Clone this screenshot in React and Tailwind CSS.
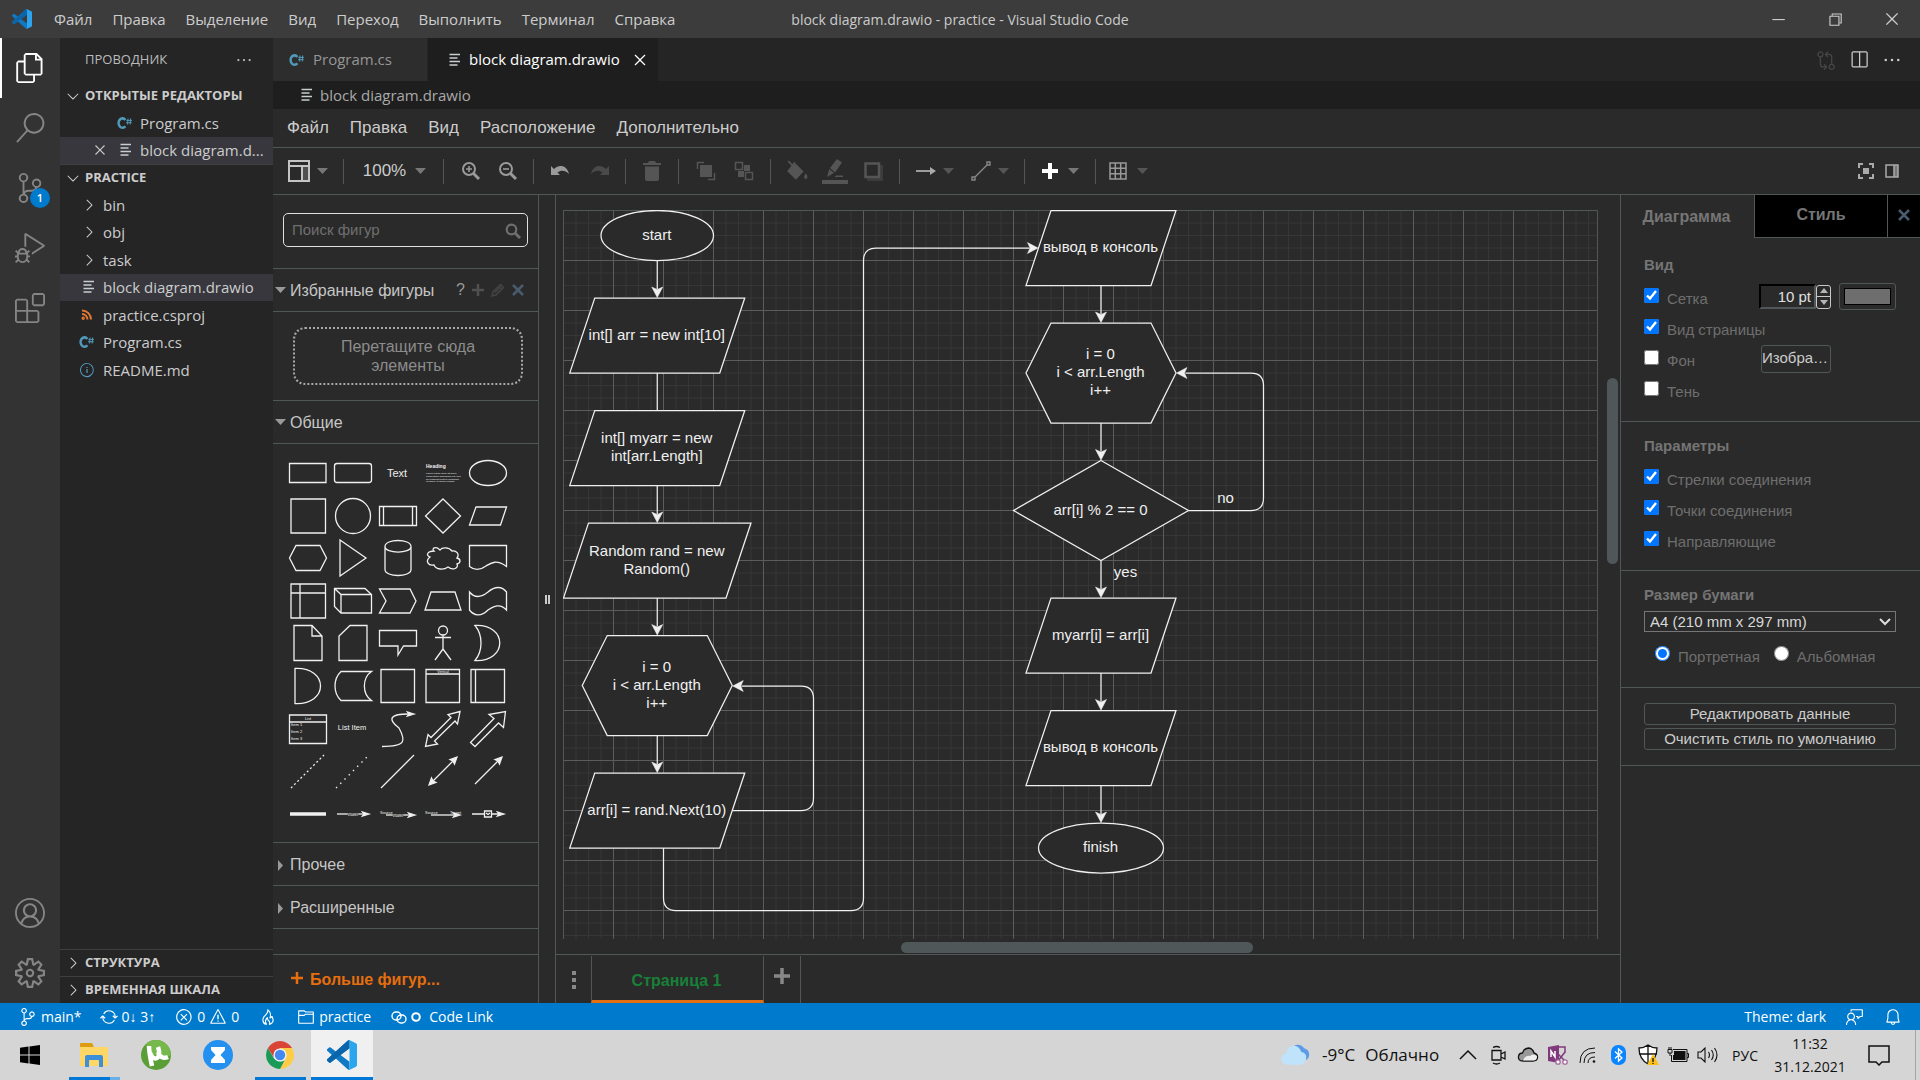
import React from "react";
import {
  VscFiles, VscSearch, VscSourceControl, VscDebugAlt, VscExtensions, VscAccount, VscSettingsGear,
  VscChevronDown, VscChevronRight, VscClose, VscEllipsis, VscSplitHorizontal, VscGitCompare,
  VscSync, VscError, VscWarning, VscFlame, VscFolder, VscFeedback, VscBell,
  VscChromeMinimize, VscChromeRestore, VscChromeClose, VscInfo,
} from "react-icons/vsc";

const UI = "font-['Open_Sans','Noto_Sans',sans-serif]";
const ARIAL = "font-['Liberation_Sans',Arial,sans-serif]";

/* ---------- small shared icons ---------- */

function VsCodeLogo({ className }) {
  return (
    <svg viewBox="0 0 100 100" className={className}>
      <path fill="#0f79c4" d="M75 27.3 45.1 50 75 72.7V98.9a6.2 6.2 0 0 1-6.3-1.2L29.4 62 12.2 75a4.2 4.2 0 0 1-5.3-.2l-5.5-5a4.2 4.2 0 0 1 0-6.2L16.3 50 1.4 36.4a4.2 4.2 0 0 1 0-6.2l5.5-5a4.2 4.2 0 0 1 5.3-.2l17.2 13L68.7 2.1A6.2 6.2 0 0 1 75 .9z" />
      <path fill="#0b65ab" d="M1.4 63.6 68.7 2.1A6.2 6.2 0 0 1 75 .9v26.4L12.2 75a4.2 4.2 0 0 1-5.3-.2l-5.5-5a4.2 4.2 0 0 1 0-6.2z" />
      <path fill="#2ba5ee" d="M75.9.9 96.5 10.8a6.3 6.3 0 0 1 3.5 5.6v67.2a6.3 6.3 0 0 1-3.5 5.6l-20.6 9.9a6.2 6.2 0 0 1-7.1-1.2c2.3 2.3 6.2.7 6.2-2.6V4.7c0-3.3-3.9-4.9-6.2-2.6a6.2 6.2 0 0 1 7.1-1.2z" />
    </svg>
  );
}

function CSharpIcon() {
  return (
    <svg viewBox="0 0 16 16" className="h-4 w-4 shrink-0" fill="none" stroke="#519aba">
      <path d="M8.3 5A3.8 4.7 0 1 0 8.3 11.2" strokeWidth="2.6" />
      <path d="M11 3.5 10.6 9.5M13.6 3.5 13.2 9.5M9.3 5.4H15M9 7.7H14.7" strokeWidth="1" />
    </svg>
  );
}

function LinesIcon() {
  return (
    <svg viewBox="0 0 16 16" className="h-4 w-4 shrink-0" stroke="#c8cdcf" strokeWidth="1.4">
      <path d="M2.5 2.5H13M2.5 6H10.5M2.5 9.5H13M2.5 13H10.5" />
    </svg>
  );
}

function FeedIcon() {
  return (
    <svg viewBox="0 0 16 16" className="h-4 w-4 shrink-0" fill="none" stroke="#e37933" strokeWidth="2">
      <path d="M3 3.5a9 9 0 0 1 9 9M3 7a5.5 5.5 0 0 1 5.5 5.5" />
      <circle cx="4.2" cy="11.3" r="0.7" />
    </svg>
  );
}

function Caret({ className = "" }) {
  return (
    <svg viewBox="0 0 11 6" className={`h-[6px] w-[11px] shrink-0 ${className}`}>
      <path d="M0 0H11L5.5 6z" fill="currentColor" />
    </svg>
  );
}

/* ---------- window chrome ---------- */

const MENUS = ["Файл", "Правка", "Выделение", "Вид", "Переход", "Выполнить", "Терминал", "Справка"];

function TitleBar() {
  return (
    <header className="relative flex h-[38px] shrink-0 items-center bg-[#3c3c3c] text-[#cccccc]">
      <VsCodeLogo className="ml-3 h-5 w-5" />
      <nav className="ml-3 flex">
        {MENUS.map((m) => (
          <button key={m} className="px-[10px] text-[15px]">{m}</button>
        ))}
      </nav>
      <h1 className="pointer-events-none absolute inset-x-0 text-center text-[14px]">
        block diagram.drawio - practice - Visual Studio Code
      </h1>
      <div className="ml-auto flex">
        <button aria-label="Свернуть" className="flex w-[57px] justify-center"><VscChromeMinimize size={18} /></button>
        <button aria-label="Восстановить" className="flex w-[57px] justify-center"><VscChromeRestore size={18} /></button>
        <button aria-label="Закрыть" className="flex w-[57px] justify-center"><VscChromeClose size={18} /></button>
      </div>
    </header>
  );
}

function ActivityBar() {
  const item = "flex h-[60px] w-full items-center justify-center";
  return (
    <nav className="flex w-[60px] shrink-0 flex-col bg-[#333333] text-[#858585]">
      <button aria-label="Проводник" className={`${item} border-l-2 border-white pr-0.5 text-white`}><VscFiles size={30} /></button>
      <button aria-label="Поиск" className={item}><VscSearch size={30} /></button>
      <button aria-label="Система управления версиями" className={`${item} relative`}>
        <VscSourceControl size={30} />
        <span className="absolute right-[10px] bottom-[10px] flex h-5 w-5 items-center justify-center rounded-full bg-[#007acc] text-[11px] font-semibold text-white">1</span>
      </button>
      <button aria-label="Запуск и отладка" className={item}><VscDebugAlt size={30} /></button>
      <button aria-label="Расширения" className={item}><VscExtensions size={30} /></button>
      <button aria-label="Учётные записи" className={`${item} mt-auto`}><VscAccount size={30} /></button>
      <button aria-label="Управление" className={item}><VscSettingsGear size={30} /></button>
    </nav>
  );
}

function SectionHead({ open, children, className = "" }) {
  const Icon = open ? VscChevronDown : VscChevronRight;
  return (
    <button className={`flex h-[27px] w-full shrink-0 items-center whitespace-nowrap pl-1 text-[13px] font-bold text-[#cccccc] ${className}`}>
      <Icon size={18} className="mr-[3px] shrink-0" />
      {children}
    </button>
  );
}

function Explorer() {
  const row = "flex items-center whitespace-nowrap text-left";
  return (
    <aside className="flex w-[213px] shrink-0 flex-col overflow-hidden bg-[#252526] text-[15px] text-[#cccccc]">
      <div className="flex h-[44px] shrink-0 items-center pl-[25px] pr-5 text-[13px] text-[#bbbbbb]">
        <h2>ПРОВОДНИК</h2>
        <button aria-label="Дополнительные действия" className="ml-auto"><VscEllipsis size={18} /></button>
      </div>
      <SectionHead open>ОТКРЫТЫЕ РЕДАКТОРЫ</SectionHead>
      <div className="grid h-[55px] shrink-0 grid-cols-1 grid-rows-2">
        <button className={`${row} gap-[7px] pl-[57px]`}><CSharpIcon />Program.cs</button>
        <button className={`${row} bg-[#37373d] pl-[31px]`}>
          <VscClose size={18} className="mr-[9px] shrink-0" />
          <LinesIcon />
          <span className="ml-[6px]">block diagram.d...</span>
        </button>
      </div>
      <SectionHead open className="border-t border-[#3f3f40]">PRACTICE</SectionHead>
      <div className="grid h-[220px] shrink-0 grid-cols-1 grid-rows-8">
        {["bin", "obj", "task"].map((d) => (
          <button key={d} className={`${row} pl-5`}><VscChevronRight size={18} className="mr-[5px]" />{d}</button>
        ))}
        <button className={`${row} gap-[6px] bg-[#37373d] pl-[21px]`}><LinesIcon />block diagram.drawio</button>
        <button className={`${row} gap-2 pl-[19px]`}><FeedIcon />practice.csproj</button>
        <button className={`${row} gap-2 pl-[19px]`}><CSharpIcon />Program.cs</button>
        <button className={`${row} gap-2 pl-[19px]`}><VscInfo size={16} color="#519aba" />README.md</button>
      </div>
      <div className="mt-auto">
        <SectionHead className="border-t border-[#3f3f40]">СТРУКТУРА</SectionHead>
        <SectionHead className="border-t border-[#3f3f40]">ВРЕМЕННАЯ ШКАЛА</SectionHead>
      </div>
    </aside>
  );
}

function EditorTabs() {
  return (
    <>
      <div className="flex h-[43px] shrink-0 bg-[#252526] text-[15px]">
        <button className="flex w-[155px] items-center gap-2 border-r border-[#252526] bg-[#2d2d2d] pl-4 pr-8 text-[#969696]">
          <CSharpIcon />Program.cs
        </button>
        <div className="flex w-[230px] items-center bg-[#1e1e1e] pl-[19px] text-white">
          <LinesIcon />
          <button className="ml-[6px] whitespace-nowrap">block diagram.drawio</button>
          <button aria-label="Закрыть вкладку" className="ml-[10px]"><VscClose size={20} /></button>
        </div>
        <div className="ml-auto flex items-center gap-[13px] pr-[18px] text-[#cccccc]">
          <button aria-label="Сравнить" className="text-[#474747]"><VscGitCompare size={20} /></button>
          <button aria-label="Разделить редактор"><VscSplitHorizontal size={20} /></button>
          <button aria-label="Ещё"><VscEllipsis size={20} /></button>
        </div>
      </div>
      <div className="flex h-7 shrink-0 items-center gap-[5px] bg-[#1e1e1e] pl-[26px] text-[15px] text-[#a9a9a9]">
        <LinesIcon />block diagram.drawio
      </div>
    </>
  );
}

/* ---------- draw.io ---------- */

function DrawioMenu() {
  return (
    <nav className="flex h-[39px] shrink-0 items-center gap-[21px] border-b border-[#505759] pl-[14px] text-[17px] text-[#cccccc]">
      {["Файл", "Правка", "Вид", "Расположение", "Дополнительно"].map((m) => (
        <button key={m}>{m}</button>
      ))}
    </nav>
  );
}

function Sep({ className = "" }) {
  return <div className={`h-[25px] w-px shrink-0 bg-[#505759] ${className}`} />;
}

function Toolbar() {
  const b = "flex shrink-0 items-center justify-center";
  return (
    <div className="flex h-[47px] shrink-0 items-center border-b border-[#505759] text-[#aaaaaa]">
      <button aria-label="Вид" className={`${b} w-[70px] gap-[7px]`}>
        <svg viewBox="0 0 22 22" className="h-[22px] w-[22px]" fill="none" stroke="#c4c4c4" strokeWidth="2">
          <path d="M14 7H21V21H14z" fill="#505050" stroke="none" />
          <path d="M1 1H21V21H1zM1 6H21M14 6V21" />
        </svg>
        <Caret className="text-[#777]" />
      </button>
      <Sep />
      <button className={`${b} w-[99px] gap-[9px] pl-0.5 text-[17px] text-[#cccccc]`}>100%<Caret className="text-[#777]" /></button>
      <Sep />
      <div className="ml-2 mr-[7px] flex">
        {["M8 5V11M5 8H11", "M5 8H11"].map((d, i) => (
          <button key={d} aria-label={i ? "Уменьшить" : "Увеличить"} className={`${b} w-[37px]`}>
            <svg viewBox="0 0 20 20" className="h-5 w-5" fill="none" stroke="#9a9a9a">
              <circle cx="8" cy="8" r="6" strokeWidth="2" />
              <path d={d} strokeWidth="1.6" />
              <path d="M12.5 12.5 18 18" strokeWidth="3" />
            </svg>
          </button>
        ))}
      </div>
      <Sep />
      <div className="ml-[6px] mr-[5px] flex">
        <button aria-label="Отменить" className={`${b} w-10`}>
          <svg viewBox="0 0 20 14" className="h-[14px] w-5 text-[#9a9a9a]"><path fill="currentColor" d="M1 2 4 5C9 0 17 1 19 10 15 6 11 6 7.5 8.5L10 11H1z" /></svg>
        </button>
        <button aria-label="Повторить" className={`${b} w-10`}>
          <svg viewBox="0 0 20 14" className="h-[14px] w-5 text-[#4a4a4a]"><path fill="currentColor" d="M19 2 16 5C11 0 3 1 1 10 5 6 9 6 12.5 8.5L10 11H19z" /></svg>
        </button>
      </div>
      <Sep />
      <button aria-label="Удалить" className={`${b} w-[52px] text-[#555]`}>
        <svg viewBox="0 0 18 20" className="h-5 w-[18px]"><path fill="currentColor" d="M0 2H5L6 0H12L13 2H18V4H0zM2 5.5H16V18Q16 20 14 20H4Q2 20 2 18z" /></svg>
      </button>
      <Sep />
      <div className="ml-2 mr-[7px] flex text-[#555]">
        <button aria-label="На передний план" className={`${b} w-[38px]`}>
          <svg viewBox="0 0 20 20" className="h-5 w-5" fill="none" stroke="currentColor"><path d="M8 1.5H1.5V8M12 18.5H18.5V12" strokeWidth="1.5" /><path d="M4 4H16V16H4z" fill="currentColor" stroke="none" /></svg>
        </button>
        <button aria-label="На задний план" className={`${b} w-[38px]`}>
          <svg viewBox="0 0 20 20" className="h-5 w-5" fill="none" stroke="currentColor"><path d="M1.5 1.5H8.5V8.5H1.5zM11.5 11.5H18.5V18.5H11.5z" strokeWidth="1.5" /><path d="M10 4H16V10H10zM4 10H10V16H4z" fill="currentColor" stroke="none" /></svg>
        </button>
      </div>
      <Sep />
      <div className="ml-[7px] mr-[7px] flex text-[#555]">
        <button aria-label="Цвет заливки" className={`${b} w-[38px]`}>
          <svg viewBox="0 0 20 20" className="h-[22px] w-[22px]"><path fill="none" stroke="currentColor" strokeWidth="1.5" d="M2 1 9 8M8 2 3 9" /><path fill="currentColor" d="M8.5 3 16 10.5 9 18 1 10zM18 12q3 4 0 5.5-3-1.5 0-5.5z" /></svg>
        </button>
        <button aria-label="Цвет линии" className={`${b} w-[38px]`}>
          <svg viewBox="0 0 26 26" className="h-[26px] w-[26px]"><path fill="currentColor" d="M0 22H26V26H0zM14 17.5H21V19H12.5zM8 10 15 1 20 4.500 13 14.500zM5 19 7.300 11 12 15z" /></svg>
        </button>
        <button aria-label="Тень" className={`${b} w-[38px]`}>
          <svg viewBox="0 0 20 20" className="h-5 w-5"><path fill="#3c3c3c" d="M4 4H20V20H4z" /><path d="M2.5 2.5H16V16H2.5z" fill="#2a2a2a" stroke="currentColor" strokeWidth="2.5" /></svg>
        </button>
      </div>
      <Sep />
      <button aria-label="Соединение" className={`${b} ml-2 w-[54px] gap-[7px]`}>
        <svg viewBox="0 0 20 12" className="h-3 w-5"><path stroke="currentColor" strokeWidth="1.8" d="M0 6H15" /><path fill="currentColor" d="M14 2 20 6 14 10z" /></svg>
        <Caret className="text-[#555]" />
      </button>
      <button aria-label="Точки пути" className={`${b} w-[56px] gap-[7px]`}>
        <svg viewBox="0 0 20 20" className="h-5 w-5" fill="none" stroke="#888" strokeWidth="1.4"><path d="M1 16H4V19H1zM16 1H19V4H16zM4 16 16 4" /></svg>
        <Caret className="text-[#555]" />
      </button>
      <Sep className="ml-[6px]" />
      <button aria-label="Вставить" className={`${b} w-[70px] gap-[9px]`}>
        <svg viewBox="0 0 18 18" className="h-[18px] w-[18px]"><path stroke="#fff" strokeWidth="4" d="M9 1V17M1 9H17" /></svg>
        <Caret className="text-[#777]" />
      </button>
      <Sep />
      <button aria-label="Таблица" className={`${b} ml-[6px] w-[52px] gap-[10px]`}>
        <svg viewBox="0 0 18 18" className="h-[18px] w-[18px]" fill="none" stroke="#999" strokeWidth="1.5"><path d="M1 1H17V17H1zM6.3 1V17M11.700 1V17M1 6.3H17M1 11.700H17" /></svg>
        <Caret className="text-[#555]" />
      </button>
      <div className="ml-auto flex items-center gap-[11px] pr-[21px]">
        <button aria-label="На весь экран">
          <svg viewBox="0 0 16 16" className="h-4 w-4"><path fill="none" stroke="#aaa" strokeWidth="2" d="M1 5V1H5M11 1H15V5M15 11V15H11M5 15H1V11" /><path fill="#aaa" d="M5 5H11V11H5z" /></svg>
        </button>
        <button aria-label="Панель формата">
          <svg viewBox="0 0 14 14" className="h-[14px] w-[14px]"><path fill="#777" d="M9 1H13V13H9z" /><path fill="none" stroke="#aaa" strokeWidth="1.5" d="M1 1H13V13H1zM9 1V13" /></svg>
        </button>
      </div>
    </div>
  );
}

/* palette thumbnails, drawn around a (0,0) centre */
const HEAD = "l-6.5 -2 1.5 2 -1.5 2z";
const THUMBS = [
  <path d="M-18.5-9.5H18V9.5H-18.5z" />,
  <rect x="-18.5" y="-9.5" width="37" height="19" rx="2.5" />,
  <text x="-1" y="4" textAnchor="middle" fontSize="11" fill="#f0f0f0" stroke="none">Text</text>,
  <g fill="#f0f0f0" stroke="none">
    <text x="-17" y="-5" fontSize="5" fontWeight="bold">Heading</text>
    <text x="-17" y="1" fontSize="2.5">Lorem ipsum dolor sit amet,</text>
    <text x="-17" y="4" fontSize="2.5">consectetur adipisicing elit, sed</text>
    <text x="-17" y="6.5" fontSize="2.5">do eiusmod tempor incididunt</text>
    <text x="-17" y="9" fontSize="2.5">ut labore et dolore magna</text>
  </g>,
  <ellipse rx="18.5" ry="12.5" />,
  <path d="M-17-17H17.5V17H-17z" />,
  <circle r="17.5" />,
  <path d="M-18.5-9.5H18.5V9.5H-18.5zM-14.5-9.5V9.5M14.5-9.5V9.5" />,
  <path d="M0-17 17.5 0 0 17-17.5 0z" />,
  <path d="M-12-9H18.5L12.5 9H-18.5z" />,
  <path d="M-12-12.5H12L18.5 0 12 12.5H-12L-18.5 0z" />,
  <path d="M-13-18 13 0-13 18z" />,
  <path d="M-13-11.5C-13-19.5 13-19.5 13-11.5V11.5C13 19.5-13 19.5-13 11.5zM-13-11.5C-13-4 13-4 13-11.5" />,
  <path d="M-9-7C-15-7-18-3-13-1-18 3-15 8-9 7-7 12 1 12 5 9 10 13 16 10 14 6 18 5 18 1 14 0 17-4 13-8 9-7 6-11-1-11-3-8-7-12-12-10-9-7z" />,
  <path d="M-18.5-12.5H18.5V8.5C8 1 3 5-2 8-8 12.5-14 12-18.5 8.5z" />,
  <path d="M-17-17H17.5V17H-17zM-8-17V17M-17-8H17.5" />,
  <path d="M-18.5-12.5H12L18.5-6.5V12H-12L-18.5 5.5zM-18.5-12.5-12-6.5H18.5M-12-6.5V12" />,
  <path d="M-18.5-12H12L18 0 12 12H-18.5L-12 0z" />,
  <path d="M-12-9H12L18 9H-18z" />,
  <path d="M-18.5-9C-12-1-5-5 0-9 7-15 14-15 18.5-9V9C12 2 6 5 0 9-7 16-14 15-18.5 9z" />,
  <path d="M-14-17.5H4L14-7V17.5H-14zM4-17.5V-7H14" />,
  <path d="M-3-17.5H14V17.5H-14V-7z" />,
  <path d="M-18.5-12.5H18.5V3H5.5L0 12V3H-18.5z" />,
  <path d="M0-8V6M-8-5.5H8M0 6-8 17M0 6 8 17M-4.5-12.5a4.5 4.5 0 1 0 9 0 4.5 4.5 0 1 0-9 0" />,
  <path d="M-13-17.5C20-19 20 19-13 17.5-5 8-5-8-13-17.5z" />,
  <path d="M-13-17.5C21-19 21 19-13 17.5z" />,
  <path d="M-12-14.5H18.5C9-8 9 8 18.5 14.5H-12C-20 7-20-7-12-14.5z" />,
  <path d="M-17-16.5H16.5V16.5H-17z" />,
  <g>
    <path d="M-17-16.5H16.5V16.5H-17zM-17-12H16.5" />
    <text x="0" y="-13" textAnchor="middle" fontSize="3.5" fill="#f0f0f0" stroke="none">Vertical</text>
  </g>,
  <path d="M-17-16.5H16.5V16.5H-17zM-12.5-16.5V16.5" />,
  <g>
    <path d="M-18.5-14H18.5V14.5H-18.5zM-18.5-7H18.5" />
    <g fill="#f0f0f0" stroke="none" fontSize="4">
      <text x="0" y="-9" textAnchor="middle">List</text>
      <text x="-17" y="-3">Item 1</text>
      <text x="-17" y="4">Item 2</text>
      <text x="-17" y="11">Item 3</text>
    </g>
  </g>,
  <text x="-1" y="1" textAnchor="middle" fontSize="7.5" fill="#f0f0f0" stroke="none">List Item</text>,
  <g><path d="M-16 17.5C8 17.5 8 12 1-1-12-11-6-15 10-15" /><path d={"M16-15" + HEAD} fill="#f0f0f0" /></g>,
  <path d="M17-17.5 14.5-5 12-8-8.5 12-5.5 15-17.5 17.5-15 5.5-12 8.5 8-11.5 5-14.5z" />,
  <path d="M17.5-17.5 15.5-1.5 10.5-6-13 17.5-17.5 13.5 6-10.5 1-14.5z" />,
  <path d="M-17 17 16-16" strokeDasharray="2 2.5" />,
  <path d="M-17 17 16-16" strokeDasharray="1.5 4.5" />,
  <path d="M-17 17 16-16" />,
  <g><path d="M-12 12 12-12" /><path fill="#f0f0f0" d="M14-14 11.5-7 10-10 7-11.5zM-14 14-11.5 7-10 10-7 11.5z" /></g>,
  <g><path d="M-13 13 12-12" /><path fill="#f0f0f0" d="M14-14 11.5-7 10-10 7-11.5z" /></g>,
  <path d="M-18 0H18" strokeWidth="3.5" />,
  <g><path d="M-16 0H10" /><path d={"M16 0" + HEAD} fill="#f0f0f0" /><text y="1.5" textAnchor="middle" fontSize="4" stroke="#2a2a2a" strokeWidth="1" paintOrder="stroke" fill="#f0f0f0">Label</text></g>,
  <g><path d="M-12 1H12" /><path d={"M17 1" + HEAD} fill="#f0f0f0" /><text x="-18" y="0" fontSize="4" stroke="none" fill="#f0f0f0">Source</text><text y="2.5" textAnchor="middle" fontSize="4" stroke="#2a2a2a" strokeWidth="1" paintOrder="stroke" fill="#f0f0f0">Label</text></g>,
  <g><path d="M-12 1H12" /><path d={"M17 1" + HEAD} fill="#f0f0f0" /><text x="-18" y="0" fontSize="4" stroke="none" fill="#f0f0f0">Source</text><text x="18" y="0" textAnchor="end" fontSize="4" stroke="none" fill="#f0f0f0">Target</text></g>,
  <g><path d="M-16 0H-4M4 0H11M-3.5-3H3.5V3H-3.5zM-2-1 0 .5 2-1" /><path d={"M16 0" + HEAD} fill="#f0f0f0" /></g>,
];

function LibTitle({ open, children, extra }) {
  return (
    <div className="box-content flex h-[42px] shrink-0 items-center border-b border-[#505759] text-[16px] text-[#c6c6c6]">
      <button className="flex items-center pt-0.5">
        <svg viewBox="0 0 11 11" className="ml-[2px] mr-1 h-[11px] w-[11px] text-[#999]">
          <path fill="currentColor" d={open ? "M0 1H11L5.5 7z" : "M3 0 8 5.5 3 11z"} />
        </svg>
        {children}
      </button>
      {extra}
    </div>
  );
}

function ShapesPanel() {
  return (
    <aside className="flex w-[266px] shrink-0 flex-col border-r border-[#505759]">
      <div className="h-[74px] shrink-0 border-b border-[#505759] px-[10px] pt-[18px]">
        <div className="flex h-[34px] items-center rounded-[5px] border border-[#e0e0e0] pl-2 pr-1.5 pt-px">
          <input aria-label="Поиск фигур" placeholder="Поиск фигур" className="w-full min-w-0 flex-1 bg-transparent text-[15px] outline-none placeholder:text-[#6f6f6f]" />
          <svg viewBox="0 0 16 16" className="h-4 w-4" fill="none" stroke="#6e6e6e"><circle cx="6.5" cy="6.5" r="4.8" strokeWidth="2.2" /><path d="M10 10 15 15" strokeWidth="3" /></svg>
        </div>
      </div>
      <LibTitle
        open
        extra={
          <div className="ml-auto flex items-center gap-[7px] pr-[14px]">
            <button aria-label="Помощь" className="text-[16px] text-[#999]">?</button>
            <button aria-label="Добавить"><svg viewBox="0 0 12 12" className="h-3 w-3"><path stroke="#505050" strokeWidth="2.5" d="M6 0V12M0 6H12" /></svg></button>
            <button aria-label="Правка"><svg viewBox="0 0 14 14" className="h-[14px] w-[14px]" fill="none" stroke="#444" strokeWidth="1.5"><path d="M1 13 2 9 9.5 1.5 12.5 4.5 5 12zM8 3 11 6M4 9.5 9 4.5" /></svg></button>
            <button aria-label="Закрыть"><svg viewBox="0 0 12 12" className="h-3 w-3"><path stroke="#4b5b6e" strokeWidth="2.5" d="M1 1 11 11M11 1 1 11" /></svg></button>
          </div>
        }
      >
        Избранные фигуры
      </LibTitle>
      <div className="h-[89px] shrink-0 border-b border-[#505759] pl-5 pr-[15px] pt-[15px]">
        <div className="flex h-[58px] items-center justify-center rounded-[12px] border-2 border-dotted border-[#a8a8a8] px-8 text-center text-[16px] leading-[19px] text-[#8c8c8c]">
          Перетащите сюда элементы
        </div>
      </div>
      <LibTitle open>Общие</LibTitle>
      <div className="h-[399px] shrink-0 border-b border-[#505759] pl-3 pt-2">
        <div className="grid h-[383px] w-[225px] grid-cols-5 grid-rows-9">
          {THUMBS.map((t, i) => (
            <svg key={i} viewBox="-22 -21 44 42" className="m-auto h-[42px] w-[44px]" fill="none" stroke="#f0f0f0" strokeWidth="1.3">{t}</svg>
          ))}
        </div>
      </div>
      <LibTitle>Прочее</LibTitle>
      <LibTitle>Расширенные</LibTitle>
      <button className="mt-auto flex h-[49px] shrink-0 items-center gap-[7px] border-t border-[#505759] pl-[18px] pt-0.5 text-[16px] font-bold text-[#e56e0e]">
        <svg viewBox="0 0 12 12" className="mb-1 h-3 w-3"><path stroke="currentColor" strokeWidth="2.500" d="M6 0V12M0 6H12" /></svg>
        Больше фигур...
      </button>
    </aside>
  );
}

/* ---------- diagram ---------- */

const para = (x, y, w) => `M${x + 25} ${y}H${x + w}L${x + w - 25} ${y + 75}H${x}z`;
const hexa = (x, y) => `M${x + 25} ${y}H${x + 125}L${x + 150} ${y + 50}L${x + 125} ${y + 100}H${x + 25}L${x} ${y + 50}z`;
const A = 93.75;
const B = 537.5;

const NODES = [
  { d: para(6.25, 87.5, 175), x: A, y: 125, t: ["int[] arr = new int[10]"] },
  { d: para(6.25, 200, 175), x: A, y: 237.5, t: ["int[] myarr = new", "int[arr.Length]"] },
  { d: para(0, 312.5, 187.5), x: A, y: 350, t: ["Random rand = new", "Random()"] },
  { d: hexa(18.75, 425), x: A, y: 475, t: ["i = 0", "i < arr.Length", "i++"] },
  { d: para(6.25, 562.5, 175), x: A, y: 600, t: ["arr[i] = rand.Next(10)"] },
  { d: para(462.5, 0, 150), x: B, y: 37.5, t: ["вывод в консоль"] },
  { d: hexa(462.5, 112.5), x: B, y: 162.5, t: ["i = 0", "i < arr.Length", "i++"] },
  { d: "M537.5 250 625 300 537.5 350 450 300z", x: B, y: 300, t: ["arr[i] % 2 == 0"] },
  { d: para(462.5, 387.5, 150), x: B, y: 425, t: ["myarr[i] = arr[i]"] },
  { d: para(462.5, 500, 150), x: B, y: 537.5, t: ["вывод в консоль"] },
];

const DOWN = [
  [A, 50, 87.5], [A, 275, 312.5], [A, 387.5, 425], [A, 525, 562.5],
  [B, 75, 112.5], [B, 212.5, 250], [B, 350, 387.5], [B, 462.5, 500], [B, 575, 612.5],
];

function Label({ x, y, lines }) {
  return lines.map((l, i) => (
    <text key={i} x={x - 0.5} y={y + 4.3 + (i - (lines.length - 1) / 2) * 18} textAnchor="middle">{l}</text>
  ));
}

function Head({ x, y, r }) {
  return <path d="M0 -0.5 -5.5 -11 0 -8.5 5.5 -11z" transform={`translate(${x} ${y}) rotate(${r})`} fill="#f0f0f0" stroke="#f0f0f0" strokeWidth="0.5" />;
}

function Diagram() {
  const cols = Array.from({ length: 83 }, (_, i) => i);
  const rows = Array.from({ length: 94 }, (_, i) => i);
  return (
    <svg width="1036" height="1170" className="block" role="img" aria-label="Блок-схема">
      <g transform="translate(.5 .5)">
        <g stroke="#363636">
          {cols.filter((i) => i % 4).map((i) => <path key={i} d={`M${i * 12.5} 0V1169`} />)}
          {rows.filter((i) => i % 4).map((i) => <path key={i} d={`M0 ${i * 12.5}H1034`} />)}
        </g>
        <g stroke="#5c5c5c">
          {cols.filter((i) => i % 4 === 0).map((i) => <path key={i} d={`M${i * 12.5} 0V1169`} />)}
          {rows.filter((i) => i % 4 === 0).map((i) => <path key={i} d={`M0 ${i * 12.5}H1034`} />)}
        </g>
        <path d="M0 0H1034V1169H0z" fill="none" stroke="#505759" />
        <g fill="none" stroke="#f0f0f0" strokeWidth="1.25">
          {DOWN.map(([x, a, b]) => <path key={`${x}-${a}`} d={`M${x} ${a}V${b - 9}`} />)}
          <path d="M93.75 162.5V200" />
          <path d="M168.75 600H237.5Q250 600 250 587.5V488Q250 475.5 237.5 475.5H178" />
          <path d="M100 637.5V687.5Q100 700 112.5 700H287.5Q300 700 300 687.5V50Q300 37.5 312.5 37.5H466" />
          <path d="M625 300H687.5Q700 300 700 287.5V175Q700 162.5 687.5 162.5H622" />
        </g>
        {DOWN.map(([x, a, b]) => <Head key={`${x}-${a}`} x={x} y={b} r={0} />)}
        <Head x={168.75} y={475.5} r={90} />
        <Head x={475} y={37.5} r={-90} />
        <Head x={612.5} y={162.5} r={90} />
        <g fill="#2a2a2a" stroke="#f0f0f0" strokeWidth="1.25">
          <ellipse cx="93.75" cy="25" rx="56.25" ry="25" />
          <ellipse cx="537.5" cy="637.5" rx="62.5" ry="25" />
          {NODES.map((n) => <path key={n.d} d={n.d} />)}
        </g>
        <g fill="#f0f0f0" fontSize="15">
          <Label x={A} y={25} lines={["start"]} />
          <Label x={B} y={637.5} lines={["finish"]} />
          {NODES.map((n) => <Label key={n.d} x={n.x} y={n.y} lines={n.t} />)}
          <Label x={662.5} y={288} lines={["no"]} />
          <Label x={562.5} y={362.5} lines={["yes"]} />
        </g>
      </g>
    </svg>
  );
}

function Canvas() {
  return (
    <section className="flex min-w-0 flex-1 flex-col border-l border-[#505759]">
      <div className="flex min-h-0 flex-1">
        <div className="min-w-0 flex-1 overflow-hidden pl-[7px] pt-[15px]"><Diagram /></div>
        <div className="w-[15px] shrink-0 pl-[2px] pt-[183px]"><div className="h-[186px] w-[11px] rounded-full bg-[#505759]" /></div>
      </div>
      <div className="h-[15px] shrink-0 pl-[345px] pt-[3px]"><div className="h-[11px] w-[352px] rounded-full bg-[#505759]" /></div>
      <div className="flex h-[49px] shrink-0 border-t border-[#505759] pt-px">
        <button aria-label="Страницы" className="flex w-[35px] items-center justify-center">
          <svg viewBox="0 0 4 18" className="h-[18px] w-1"><path fill="#888" d="M0 0H4V4H0zM0 7H4V11H0zM0 14H4V18H0z" /></svg>
        </button>
        <button className="w-[173px] border-x border-b-[3px] border-x-[#505759] border-b-[#e56e0e] pr-0.5 pt-[5px] text-[16px] font-bold text-[#188038]">Страница 1</button>
        <button aria-label="Добавить страницу" className="flex w-[37px] items-start justify-center border-r border-[#505759] pt-3">
          <svg viewBox="0 0 16 16" className="h-4 w-4"><path stroke="#888" strokeWidth="3.5" d="M8 0V16M0 8H16" /></svg>
        </button>
      </div>
    </section>
  );
}

/* ---------- format panel ---------- */

function Check({ label, checked, children }) {
  return (
    <div className="flex h-[31px] items-start">
      <label className="flex items-start gap-2 text-[15px] leading-[17px] text-[#6e6e6e]">
        <input type="checkbox" defaultChecked={checked} className="h-[15px] w-[15px]" />
        <span className="pt-0.5">{label}</span>
      </label>
      {children}
    </div>
  );
}

function FormatPanel() {
  const head = "text-[15px] font-bold leading-[18px] text-[#757575]";
  const sec = "border-b border-[#505759] pl-[23px] pr-6";
  const btn = "h-[22px] rounded-[3px] border border-[#505759] text-[15px] leading-[18px] text-[#cccccc]";
  return (
    <aside className="w-[300px] shrink-0 border-l border-[#505759]">
      <div className="flex h-[43px] text-[16px] font-bold text-[#757575]">
        <button className="w-[133px] pr-0.5">Диаграмма</button>
        <button className="w-[133px] border-b border-l border-[#505759] bg-black pb-[3px]">Стиль</button>
        <button aria-label="Закрыть" className="flex flex-1 items-center justify-center border-b border-l border-[#505759] bg-black pb-[3px]">
          <svg viewBox="0 0 12 12" className="h-3 w-3"><path stroke="#4b5b6e" strokeWidth="2.5" d="M1 1 11 11M11 1 1 11" /></svg>
        </button>
      </div>
      <div className={`${sec} h-[184px] pt-[18px]`}>
        <h3 className={`${head} mb-[14px]`}>Вид</h3>
        <Check label="Сетка" checked>
          <div className="-mt-[5px] ml-auto flex items-center">
            <input aria-label="Размер сетки" defaultValue="10 pt" className="h-[25px] w-[57px] border-2 border-l-black border-t-black border-b-[#505759] border-r-[#505759] bg-transparent pr-[3px] text-right text-[15px] text-[#e0e0e0]" />
            <div className="flex h-6 w-[15px] flex-col rounded-[3px] border border-[#c8c8c8]">
              <button aria-label="Больше" className="flex flex-1 items-center justify-center border-b border-[#c8c8c8]"><svg viewBox="0 0 8 5" className="h-[5px] w-2"><path fill="#b5b5b5" d="M0 5H8L4 0z" /></svg></button>
              <button aria-label="Меньше" className="flex flex-1 items-center justify-center"><svg viewBox="0 0 8 5" className="h-[5px] w-2"><path fill="#b5b5b5" d="M0 0H8L4 5z" /></svg></button>
            </div>
            <button aria-label="Цвет сетки" className="ml-2 h-[27px] w-[57px] rounded-[3px] border border-[#505759] p-1"><span className="block h-full border border-black bg-[#6e6e6e]" /></button>
          </div>
        </Check>
        <Check label="Вид страницы" checked />
        <Check label="Фон">
          <button className="-mt-[5px] ml-auto mr-[65px] h-7 w-[70px] rounded-[3px] border border-[#505759] pb-0.5 pr-0.5 text-[15px] text-[#cccccc]">Изобра…</button>
        </Check>
        <Check label="Тень" />
      </div>
      <div className={`${sec} h-[149px] pt-[15px]`}>
        <h3 className={`${head} mb-[14px]`}>Параметры</h3>
        <Check label="Стрелки соединения" checked />
        <Check label="Точки соединения" checked />
        <Check label="Направляющие" checked />
      </div>
      <div className={`${sec} h-[117px] pt-[15px]`}>
        <h3 className={`${head} mb-[7px]`}>Размер бумаги</h3>
        <div className="relative">
          <select aria-label="Размер бумаги" className="block h-[21px] w-full appearance-none border border-[#767676] bg-[#2a2a2a] px-[5px] text-[15px] leading-[19px] text-[#d8d8d8]">
            <option>A4 (210 mm x 297 mm)</option>
          </select>
          <svg viewBox="0 0 12 8" className="pointer-events-none absolute right-[5px] top-[7px] h-2 w-3" fill="none" stroke="#ddd" strokeWidth="2"><path d="M1 1 6 6 11 1" /></svg>
        </div>
        <div className="mt-[14px] flex gap-[14px] pl-[11px] text-[15px] leading-[17px] text-[#6e6e6e]">
          <label className="flex gap-2"><input type="radio" name="orient" defaultChecked className="h-[15px] w-[15px]" /><span className="pt-0.5">Портретная</span></label>
          <label className="flex gap-2"><input type="radio" name="orient" className="h-[15px] w-[15px]" /><span className="pt-0.5">Альбомная</span></label>
        </div>
      </div>
      <div className={`${sec} flex h-[78px] flex-col gap-[3px] pt-[15px]`}>
        <button className={btn}>Редактировать данные</button>
        <button className={btn}>Очистить стиль по умолчанию</button>
      </div>
    </aside>
  );
}

/* ---------- bottom bars ---------- */

function StatusBar() {
  const b = "flex items-center gap-1 whitespace-nowrap";
  return (
    <footer className="flex h-[27px] shrink-0 items-center bg-[#007acc] text-[14px] text-white">
      <button className={`${b} ml-[19px]`}><VscSourceControl size={18} />main*</button>
      <button className={`${b} ml-[18px]`}><VscSync size={18} />0↓ 3↑</button>
      <button className={`${b} ml-5`}><VscError size={18} />0<VscWarning size={18} />0</button>
      <button aria-label="Flame" className="ml-5"><VscFlame size={18} /></button>
      <button className={`${b} ml-5`}><VscFolder size={18} />practice</button>
      <button className={`${b} ml-5`}>
        <svg viewBox="0 0 30 16" className="h-4 w-[30px]" fill="none" stroke="#fff"><rect x="1" y="3" width="9" height="8" rx="4" strokeWidth="1.4" /><rect x="6" y="6" width="9" height="8" rx="4" strokeWidth="1.4" /><circle cx="25" cy="8" r="3.8" strokeWidth="2" /></svg>
        <span className="ml-1">Code Link</span>
      </button>
      <button className="ml-auto">Theme: dark</button>
      <button aria-label="Отзыв" className="ml-5"><VscFeedback size={18} /></button>
      <button aria-label="Уведомления" className="ml-5 mr-[18px]"><VscBell size={18} /></button>
    </footer>
  );
}

function TrayIcon({ label, children }) {
  return (
    <button aria-label={label} className="flex w-[30px] justify-center">
      <svg viewBox="0 0 22 22" className="h-[22px] w-[22px]" fill="none" stroke="#111" strokeWidth="1.3">{children}</svg>
    </button>
  );
}

function TaskItem({ label, active, children, bar }) {
  return (
    <button aria-label={label} className={`relative flex h-full w-[62px] items-center justify-center ${active ? "bg-[#f0f0f0]" : ""}`}>
      {children}
      {bar}
    </button>
  );
}

function Taskbar() {
  return (
    <footer className="flex h-[50px] shrink-0 items-center bg-[#d5d5d5] text-[#111]">
      <button aria-label="Пуск" className="flex w-[60px] justify-center">
        <svg viewBox="0 0 20 20" className="h-5 w-5"><path fill="#000" d="M0 2.8 8.5 1.6V9.5H0zM9.5 1.5 20 0V9.5H9.5zM0 10.5H8.5V18.4L0 17.2zM9.5 10.5H20V20L9.5 18.5z" /></svg>
      </button>
      <div className="ml-[3px] flex h-full">
        <TaskItem label="Проводник" bar={<><span className="absolute bottom-0 left-[6px] h-[3px] w-[41px] bg-[#0078d7]" /><span className="absolute bottom-0 left-[47px] h-[3px] w-[10px] bg-[#6cb0e8]" /></>}>
          <svg viewBox="0 0 28 24" className="h-6 w-7">
            <path fill="#dd9c12" d="M0 1Q0 0 1 0H12L14 4H0z" /><path fill="#ffd767" d="M0 4H28V22Q28 23 27 23H1Q0 23 0 22z" />
            <path fill="#3d8fd9" d="M5 24V14Q5 12 7 12H21Q23 12 23 14V24H19V18Q19 17 18 17H10Q9 17 9 18V24z" />
          </svg>
        </TaskItem>
        <TaskItem label="uTorrent">
          <svg viewBox="0 0 30 30" className="h-[30px] w-[30px]"><circle cx="15" cy="15" r="15" fill="#5a9e38" /><path fill="#76b84c" d="M15 0A15 15 0 0 1 30 15Q20 22 10 12 6 8 5 4 9 0 15 0z" /><path fill="none" stroke="#fff" strokeWidth="4.500" d="M8 6Q8 12 11 26M9 13q3 7 7 5 4-2 1-11M17 12q3 8 10 5" /></svg>
        </TaskItem>
        <TaskItem label="Z">
          <svg viewBox="0 0 30 30" className="h-[30px] w-[30px]"><circle cx="15" cy="15" r="15" fill="#2490ef" /><path fill="#fff" d="M8 7H22V10L17.5 15 22 20V23H8V20L12.5 15 8 10z" /></svg>
        </TaskItem>
        <TaskItem label="Chrome" bar={<span className="absolute bottom-0 left-[6px] h-[3px] w-[51px] bg-[#0078d7]" />}>
          <svg viewBox="0 0 28 28" className="h-7 w-7">
            <path fill="#fc4" d="M14 7H26.1A14 14 0 0 1 14 28L20 17.5z" />
            <path fill="#199b57" d="M14 28A14 14 0 0 1 1.9 7L8 17.5 14 20.5 18.5 19.5z" />
            <path fill="#da4437" d="M1.9 7A14 14 0 0 1 26.1 7H14L7.5 16z" />
            <circle cx="14" cy="14" r="6.6" fill="#f1f1f1" /><circle cx="14" cy="14" r="5.2" fill="#4688f1" />
          </svg>
        </TaskItem>
        <TaskItem label="Visual Studio Code" active bar={<span className="absolute bottom-0 left-0 h-[3px] w-full bg-[#0078d7]" />}>
          <VsCodeLogo className="h-[30px] w-[30px]" />
        </TaskItem>
      </div>
      <div className="ml-auto flex h-full items-center">
        <button className="flex items-center text-[17px]">
          <svg viewBox="0 0 30 22" className="mr-3 h-[22px] w-[29px]"><path fill="#5d9be6" d="M14 1Q20-1 24 4 30 6 29 12 28 17 22 17z" /><path fill="#bfe3fb" d="M6 21Q0 20 .5 14.5 1 10 5.5 9.5 6 2 13.5 1.5 19 2 21 8 27 9 26 15 25 20 20 21z" /></svg>
          <span className="mr-[10px]">-9°C</span><span>Облачно</span>
        </button>
        <div className="ml-[14px] flex">
          <TrayIcon label="Скрытые значки"><path d="M3 15 11 7 19 15" strokeWidth="1.5" /></TrayIcon>
          <TrayIcon label="Камера"><path d="M5 6.500H14V16H5zM14 10 18 8V15L14 13M6 3.5Q9.5 1.5 13 3.5M6 19Q9.5 21 13 19" /></TrayIcon>
          <TrayIcon label="OneDrive"><path fill="#999" d="M6 17Q1 17 1.5 12.5 2 9 5.5 9 7 4 12 4 16 5 17 9 21 10 20.5 14 20 17 16 17z" /><path fill="#eee" stroke="none" d="M6 16.5Q8 11 13 12 16 9 20 12 20 16.5 16 16.5z" /></TrayIcon>
          <TrayIcon label="OneNote"><path fill="#80397b" stroke="none" d="M1 3 12 1V19L1 17z" /><path stroke="#fff" d="M4 13V7L8 13V7" strokeWidth="1.5" /><path stroke="#80397b" d="M12 3H18V9M10 9 18 17M18 8 11 17" strokeWidth="1.5" /><circle cx="11" cy="18" r="2.2" stroke="#a56aa0" fill="#fff" /><circle cx="18" cy="18" r="2.2" stroke="#a56aa0" fill="#fff" /></TrayIcon>
          <TrayIcon label="Сеть"><path strokeWidth="1" d="M3 19Q3 4 18 4M7 19Q7 8.5 18 8.5M11 19Q11 13 18 13" /><circle cx="17" cy="17.5" r="1.3" fill="#111" stroke="none" /></TrayIcon>
          <TrayIcon label="Bluetooth"><rect x="4" y="1" width="15" height="20" rx="7" fill="#0a84ff" stroke="none" /><path stroke="#fff" d="M8 7.5 15 14 11.5 17V5L15 8 8 14.5" /></TrayIcon>
          <TrayIcon label="Защита"><path fill="#fff" d="M11 1Q15 4 20 4 20 15 11 20 2 15 2 4 7 4 11 1zM11 1V20M2 10H20" /><path fill="#fcbf16" stroke="none" d="M16 10 22 21H10z" /><path d="M16 14V18M16 19V20" /></TrayIcon>
          <TrayIcon label="Батарея"><path fill="#111" stroke="none" d="M7 7H18.500V16H6V11H7z" /><path strokeWidth="1" d="M6 5.500H20V17.500H4.500V11M20 9.500H21.500V13.500H20M1 5.500H5V9H1zM3 9V12M2 5V3M4 5V3" /></TrayIcon>
          <TrayIcon label="Громкость"><path strokeWidth="1.100" d="M1 8H4L8 4V18L4 14H1zM11.5 8Q13.5 11 11.5 14M14.5 6Q18 11 14.5 16M17.5 4Q22.5 11 17.5 18" /></TrayIcon>
        </div>
        <button className="ml-[9px] text-[14px]">РУС</button>
        <button className="ml-4 w-[72px] whitespace-nowrap text-center text-[14px] leading-[23px]">
          <span className="block">11:32</span><span className="block">31.12.2021</span>
        </button>
        <button aria-label="Центр уведомлений" className="ml-[22px]">
          <svg viewBox="0 0 22 22" className="h-[22px] w-[22px]" fill="none" stroke="#111" strokeWidth="1.5"><path d="M1 2H21V18H14L11 21 8 18H1z" /></svg>
        </button>
        <div className="ml-[25px] mr-1 h-full w-px bg-[#a5a5a5]" />
      </div>
    </footer>
  );
}

export default function App() {
  return (
    <div className={`flex h-screen flex-col overflow-hidden bg-[#1e1e1e] ${UI}`}>
      <TitleBar />
      <div className="flex min-h-0 flex-1">
        <ActivityBar />
        <Explorer />
        <main className="flex min-w-0 flex-1 flex-col">
          <EditorTabs />
          <div className={`flex min-h-0 flex-1 flex-col bg-[#2a2a2a] ${ARIAL}`}>
            <DrawioMenu />
            <Toolbar />
            <div className="flex min-h-0 flex-1">
              <ShapesPanel />
              <div className="flex w-4 shrink-0 items-center justify-center">
                <svg viewBox="0 0 5 9" className="h-[9px] w-[5px]"><path fill="#ccc" d="M0 0H2V9H0zM3 0H5V9H3z" /></svg>
              </div>
              <Canvas />
              <FormatPanel />
            </div>
          </div>
        </main>
      </div>
      <StatusBar />
      <Taskbar />
    </div>
  );
}
